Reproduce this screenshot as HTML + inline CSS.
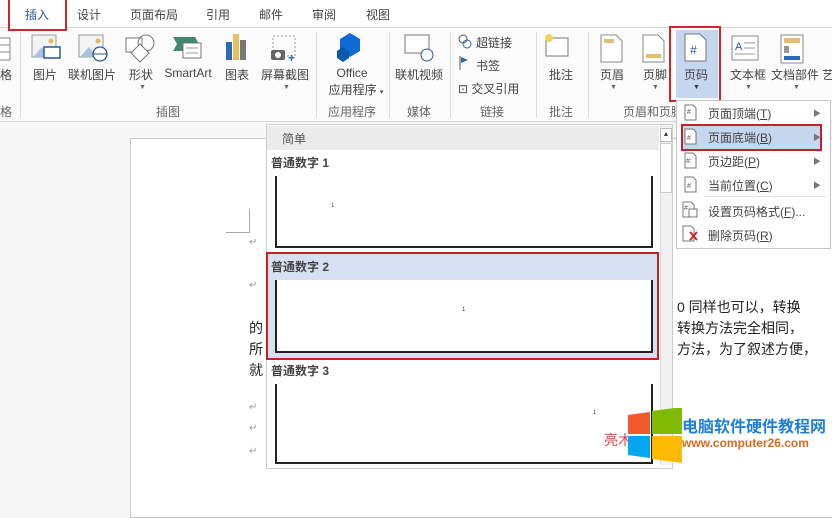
<!DOCTYPE html>
<html><head><meta charset="utf-8"><style>
*{margin:0;padding:0;box-sizing:border-box}
body{width:832px;height:465px;overflow:hidden;background:#f7f7f7;font-family:"Liberation Sans","Microsoft YaHei","Noto Sans CJK SC",sans-serif;font-size:12px;color:#444;position:relative}
.a{position:absolute;white-space:nowrap}
.c{transform:translateX(-50%)}
.sep{position:absolute;top:32px;width:1px;height:86px;background:#ddd}
.ic{position:absolute}
.arr{position:absolute;font-size:7px;color:#666}
.mi{position:absolute;left:708px;font-size:12px;color:#444}
.ma{position:absolute;left:813px;font-size:8px;color:#777}
.ret{position:absolute;left:249px;font-size:10px;color:#999}
</style></head><body>
<div class="a" style="left:0;top:0;width:832px;height:28px;background:#fff"></div>
<div class="a" style="left:0;top:27px;width:832px;height:95px;background:#fbfbfb;border-top:1px solid #d8d8d8;border-bottom:1px solid #d4d4d4"></div>
<div class="a" style="left:8px;top:0;width:59px;height:31px;border:2px solid #d0262b;border-top:none;background:#fff"></div>
<div class="a c" style="left:37px;top:6px;color:#2b579a;font-size:12px">插入</div>
<div class="a c" style="left:89px;top:6px">设计</div>
<div class="a c" style="left:154px;top:6px">页面布局</div>
<div class="a c" style="left:218px;top:6px">引用</div>
<div class="a c" style="left:271px;top:6px">邮件</div>
<div class="a c" style="left:324px;top:6px">审阅</div>
<div class="a c" style="left:378px;top:6px">视图</div>

<div class="sep" style="left:20px"></div><div class="sep" style="left:316px"></div><div class="sep" style="left:389px"></div><div class="sep" style="left:450px"></div><div class="sep" style="left:536px"></div><div class="sep" style="left:588px"></div>

<svg class="ic" style="left:0;top:30px" width="832" height="40">
<rect x="-4" y="8" width="14" height="22" fill="#fff" stroke="#888"/><line x1="-4" y1="15" x2="10" y2="15" stroke="#888"/><line x1="-4" y1="22" x2="10" y2="22" stroke="#888"/>
<rect x="32" y="5" width="24" height="22" fill="#f3f3f3" stroke="#999"/><circle cx="51" cy="11" r="2.5" fill="#e8b860"/><path d="M33 27 L42 17 L50 27Z" fill="#a9c3dc"/><rect x="44" y="17" width="16" height="11" fill="#fff" stroke="#2b579a" stroke-width="1.5"/>
<rect x="79" y="5" width="24" height="22" fill="#f3f3f3" stroke="#999"/><circle cx="98" cy="11" r="2.5" fill="#e8b860"/><path d="M80 27 L89 17 L97 27Z" fill="#a9c3dc"/><circle cx="100" cy="24" r="7" fill="#fff" stroke="#2b579a" stroke-width="1.3"/><line x1="93" y1="24" x2="107" y2="24" stroke="#2b579a"/>
<rect x="126" y="8" width="16" height="14" fill="#fff" stroke="#777"/><circle cx="146" cy="13" r="8" fill="none" stroke="#777"/><path d="M140 14 L149 23 L140 32 L131 23Z" fill="#fff" stroke="#777"/>
<path d="M173 7 L195 7 L199 14 L195 21 L173 21 L177 14Z" fill="#3f8a6f"/><rect x="183" y="13" width="18" height="15" fill="#fff" stroke="#777"/><line x1="186" y1="18" x2="198" y2="18" stroke="#999"/><line x1="186" y1="23" x2="198" y2="23" stroke="#999"/>
<rect x="226" y="12" width="6" height="18" fill="#2b6cb0"/><rect x="233" y="4" width="6" height="26" fill="#e8c060"/><rect x="240" y="10" width="6" height="20" fill="#777"/>
<rect x="273" y="6" width="22" height="20" fill="none" stroke="#999" stroke-dasharray="2 2"/><rect x="271" y="20" width="14" height="10" rx="2" fill="#666"/><circle cx="278" cy="25" r="3" fill="#fff"/><text x="288" y="32" fill="#2b6cb0" font-size="12" font-weight="bold">+</text>
<path d="M350 3 L360 9 L360 21 L350 27 L340 21 L340 9Z" fill="#0d6ad3"/><path d="M343 17 L349 21 L349 28 L343 32 L337 28 L337 21Z" fill="#0a58b0"/>
<rect x="405" y="5" width="24" height="18" fill="#fff" stroke="#777"/><circle cx="427" cy="25" r="6" fill="#fff" stroke="#2b579a"/>
<circle cx="463" cy="9" r="4" fill="none" stroke="#555"/><circle cx="467" cy="14" r="4" fill="none" stroke="#2b6cb0"/>
<line x1="460" y1="26" x2="460" y2="40" stroke="#555"/><path d="M461 27 L468 30 L461 33Z" fill="#2b6cb0"/>
<rect x="546" y="8" width="22" height="18" fill="#fff" stroke="#777"/><circle cx="549" cy="8" r="4" fill="#f2d45c"/>
<path d="M601 5 L616 5 L622 11 L622 32 L601 32Z" fill="#fff" stroke="#888"/><rect x="604" y="9" width="10" height="4" fill="#e0c070"/>
<path d="M643 5 L658 5 L664 11 L664 32 L643 32Z" fill="#fff" stroke="#888"/><rect x="646" y="24" width="15" height="4" fill="#e0c070"/>
</svg>
<div class="a" style="left:676px;top:30px;width:42px;height:68px;background:#c5d7ee"></div>
<div class="a" style="left:669px;top:26px;width:52px;height:76px;border:2px solid #d0262b"></div>
<svg class="ic" style="left:683px;top:33px" width="26" height="30"><path d="M2 1 L17 1 L23 7 L23 28 L2 28Z" fill="#fff" stroke="#777"/><text x="7" y="21" font-size="12" fill="#2b579a" font-style="italic">#</text></svg>
<svg class="ic" style="left:730px;top:33px" width="100" height="32"><rect x="2" y="3" width="26" height="24" fill="#fff" stroke="#888"/><text x="5" y="17" font-size="11" fill="#2b579a">A</text><line x1="14" y1="10" x2="25" y2="10" stroke="#999"/><line x1="14" y1="15" x2="25" y2="15" stroke="#999"/><line x1="5" y1="21" x2="25" y2="21" stroke="#999"/>
<rect x="51" y="2" width="22" height="28" fill="#fff" stroke="#888"/><rect x="54" y="5" width="16" height="5" fill="#e0c070"/><rect x="54" y="13" width="5" height="7" fill="#999"/><rect x="54" y="23" width="16" height="4" fill="#2b6cb0"/></svg>

<div class="a" style="left:0;top:66px">格</div>
<div class="a c" style="left:45px;top:66px">图片</div>
<div class="a c" style="left:92px;top:66px">联机图片</div>
<div class="a c" style="left:141px;top:66px">形状</div>
<div class="a c" style="left:188px;top:66px">SmartArt</div>
<div class="a c" style="left:237px;top:66px">图表</div>
<div class="a c" style="left:285px;top:66px">屏幕截图</div>
<div class="a c" style="left:352px;top:66px">Office</div>
<div class="a c" style="left:356px;top:81px">应用程序 <span style="font-size:7px">▾</span></div>
<div class="a c" style="left:419px;top:66px">联机视频</div>
<div class="a" style="left:476px;top:34px">超链接</div>
<div class="a" style="left:476px;top:57px">书签</div>
<div class="a" style="left:458px;top:80px">⊡ 交叉引用</div>
<div class="a c" style="left:561px;top:66px">批注</div>
<div class="a c" style="left:612px;top:66px">页眉</div>
<div class="a c" style="left:655px;top:66px">页脚</div>
<div class="a c" style="left:696px;top:66px">页码</div>
<div class="a c" style="left:748px;top:66px">文本框</div>
<div class="a c" style="left:795px;top:66px">文档部件</div>
<div class="a" style="left:822px;top:66px">艺</div>
<div class="arr" style="left:139px;top:84px">▼</div><div class="arr" style="left:283px;top:84px">▼</div><div class="arr" style="left:610px;top:84px">▼</div><div class="arr" style="left:652px;top:84px">▼</div><div class="arr" style="left:693px;top:84px;color:#333">▼</div><div class="arr" style="left:745px;top:84px">▼</div><div class="arr" style="left:793px;top:84px">▼</div>
<div class="a" style="left:0;top:103px;color:#666">格</div>
<div class="a c" style="left:168px;top:103px;color:#666">插图</div>
<div class="a c" style="left:352px;top:103px;color:#666">应用程序</div>
<div class="a c" style="left:419px;top:103px;color:#666">媒体</div>
<div class="a c" style="left:492px;top:103px;color:#666">链接</div>
<div class="a c" style="left:561px;top:103px;color:#666">批注</div>
<div class="a" style="left:623px;top:103px;color:#666">页眉和页脚</div>

<div class="a" style="left:130px;top:138px;width:760px;height:380px;background:#fff;border:1px solid #c8c8c8"></div>
<div class="a" style="left:226px;top:209px;width:24px;height:24px;border-right:1px solid #aaa;border-bottom:1px solid #aaa"></div>
<div class="ret" style="top:237px">↵</div><div class="ret" style="top:280px">↵</div><div class="ret" style="top:402px">↵</div><div class="ret" style="top:423px">↵</div><div class="ret" style="top:446px">↵</div>
<div class="a" style="left:249px;top:318px;font-size:14px;color:#222;line-height:21px">的<br>所<br>就</div>
<div class="a" style="left:677px;top:297px;font-size:14px;color:#222;line-height:21px">0 同样也可以，转换<br>转换方法完全相同，<br>方法，为了叙述方便，</div>

<div class="a" style="left:266px;top:124px;width:407px;height:345px;background:#fff;border:1px solid #ccc"></div>
<div class="a" style="left:267px;top:126px;width:392px;height:24px;background:#ebebeb"></div>
<div class="a" style="left:282px;top:130px;color:#555">简单</div>
<div class="a" style="left:660px;top:125px;width:12px;height:340px;background:#f0f0f0;border-left:1px solid #ddd"></div>
<div class="a" style="left:660px;top:128px;width:12px;height:14px;background:#fff;border:1px solid #bbb;font-size:7px;text-align:center;line-height:12px">▲</div>
<div class="a" style="left:660px;top:143px;width:12px;height:50px;background:#fff;border:1px solid #ccc"></div>
<div class="a" style="left:271px;top:154px;font-weight:bold;color:#444">普通数字 1</div>
<div class="a" style="left:275px;top:176px;width:378px;height:72px;border:2px solid #222;border-top:none"></div>
<div class="a" style="left:331px;top:203px;font-size:6px">1</div>
<div class="a" style="left:266px;top:252px;width:393px;height:108px;background:#d6e0f0;border:2px solid #c81e24"></div>
<div class="a" style="left:271px;top:258px;font-weight:bold;color:#444">普通数字 2</div>
<div class="a" style="left:275px;top:280px;width:378px;height:73px;background:#fff;border:2px solid #222;border-top:none"></div>
<div class="a" style="left:462px;top:307px;font-size:6px">1</div>
<div class="a" style="left:271px;top:362px;font-weight:bold;color:#444">普通数字 3</div>
<div class="a" style="left:275px;top:384px;width:378px;height:80px;border:2px solid #222;border-top:none"></div>
<div class="a" style="left:593px;top:410px;font-size:6px">1</div>

<div class="a" style="left:676px;top:100px;width:155px;height:149px;background:#fff;border:1px solid #c6c6c6"></div>
<div class="a" style="left:681px;top:124px;width:141px;height:27px;background:#c5d7ee;border:2px solid #c81e24"></div>
<div class="a" style="left:704px;top:196px;width:122px;height:1px;background:#e2e2e2"></div>
<svg class="ic" style="left:682px;top:104px" width="20" height="140"><g fill="#fff" stroke="#777"><path d="M3 1 L11 1 L14 4 L14 16 L3 16Z"/><path d="M3 25 L11 25 L14 28 L14 40 L3 40Z"/><path d="M3 49 L11 49 L14 52 L14 64 L3 64Z"/><path d="M3 73 L11 73 L14 76 L14 88 L3 88Z"/><path d="M1 98 L9 98 L12 101 L12 113 L1 113Z"/><path d="M1 122 L9 122 L12 125 L12 137 L1 137Z"/></g>
<g font-size="7" fill="#555"><text x="5" y="10">#</text><text x="5" y="36">#</text><text x="4" y="59">#:</text><text x="5" y="84">#</text><text x="2" y="106">#</text></g><rect x="7" y="105" width="8" height="8" fill="#fff" stroke="#777"/><path d="M8 128 L15 136 M15 128 L8 136" stroke="#d0262b" stroke-width="2"/></svg>
<div class="mi" style="top:105px">页面顶端(<u>T</u>)</div>
<div class="mi" style="top:129px">页面底端(<u>B</u>)</div>
<div class="mi" style="top:153px">页边距(<u>P</u>)</div>
<div class="mi" style="top:177px">当前位置(<u>C</u>)</div>
<div class="mi" style="top:203px">设置页码格式(<u>F</u>)...</div>
<div class="mi" style="top:227px">删除页码(<u>R</u>)</div>
<div class="ma" style="top:108px">▶</div><div class="ma" style="top:132px">▶</div><div class="ma" style="top:156px">▶</div><div class="ma" style="top:180px">▶</div>

<div class="a" style="left:604px;top:430px;color:#e04040;font-size:14px">亮木</div>
<svg class="ic" style="left:628px;top:408px" width="54" height="56"><path d="M0 7 L22 4 L22 26 L0 26Z" fill="#f2592a"/><path d="M24 3 L54 -1 L54 26 L24 26Z" fill="#80bb01"/><path d="M0 28 L22 28 L22 50 L0 47Z" fill="#05a6f0"/><path d="M24 28 L54 28 L54 55 L24 51Z" fill="#ffba01"/></svg>
<div class="a" style="left:682px;top:413px;color:#1f7fd8;font-size:16px;font-weight:bold">电脑软件硬件教程网</div>
<div class="a" style="left:682px;top:436px;color:#d86a20;font-size:12px;font-weight:bold">www.computer26.com</div>
</body></html>
